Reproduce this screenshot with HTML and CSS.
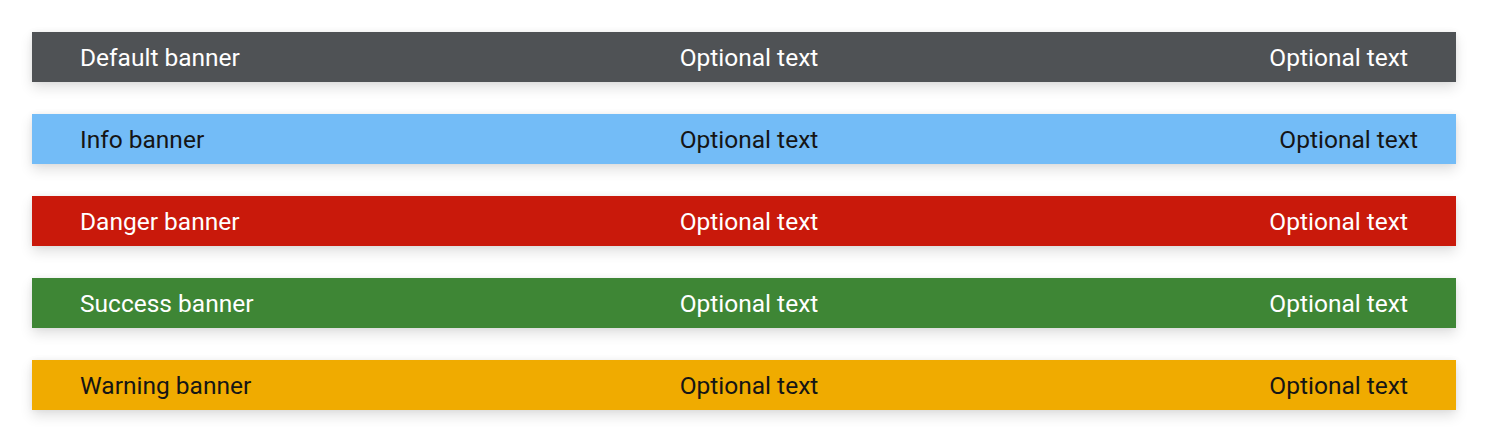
FILE: index.html
```html
<!DOCTYPE html>
<html lang="en">
<head>
<meta charset="utf-8">
<title>Banners</title>
<link rel="stylesheet" href="styles.css">
</head>
<body>
  <div class="stack">
    <div class="banner banner--default">
      <span class="banner__start">Default banner</span>
      <span class="banner__middle">Optional text</span>
      <span class="banner__end">Optional text</span>
    </div>
    <div class="banner banner--info">
      <span class="banner__start">Info banner</span>
      <span class="banner__middle">Optional text</span>
      <span class="banner__end">Optional text</span>
    </div>
    <div class="banner banner--danger">
      <span class="banner__start">Danger banner</span>
      <span class="banner__middle">Optional text</span>
      <span class="banner__end">Optional text</span>
    </div>
    <div class="banner banner--success">
      <span class="banner__start">Success banner</span>
      <span class="banner__middle">Optional text</span>
      <span class="banner__end">Optional text</span>
    </div>
    <div class="banner banner--warning">
      <span class="banner__start">Warning banner</span>
      <span class="banner__middle">Optional text</span>
      <span class="banner__end">Optional text</span>
    </div>
  </div>
</body>
</html>
```

FILE: styles.css
```css
html, body {
  margin: 0;
  padding: 0;
  background: #ffffff;
}

body {
  font-family: Roboto, "Liberation Sans", sans-serif;
}

.stack {
  display: flex;
  flex-direction: column;
  gap: 32px;
  padding: 32px;
}

.banner {
  box-sizing: border-box;
  display: grid;
  grid-template-columns: 1fr auto 1fr;
  align-items: center;
  height: 50px;
  padding: 2px 38px 0 48px;
  font-size: 24.5px;
  line-height: 1;
  box-shadow: 0 6px 12px rgba(3, 3, 3, 0.12), 0 0 6px rgba(3, 3, 3, 0.06);
}

.banner__start {
  justify-self: start;
}

.banner__middle {
  justify-self: center;
}

.banner__end {
  justify-self: end;
  padding-right: 10px;
}

.banner--default {
  background: #4f5255;
  color: #ffffff;
}

.banner--info {
  background: #73bcf7;
  color: #151515;
}

.banner--info .banner__end {
  padding-right: 0;
}

.banner--danger {
  background: #c9190b;
  color: #ffffff;
}

.banner--success {
  background: #3e8635;
  color: #ffffff;
}

.banner--warning {
  background: #f0ab00;
  color: #151515;
}
```
